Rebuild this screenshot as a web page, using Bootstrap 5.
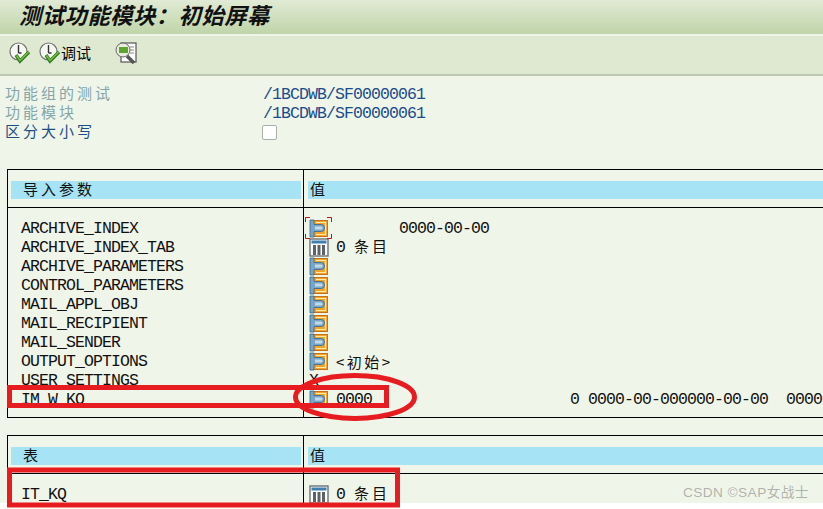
<!DOCTYPE html>
<html lang="zh"><head><meta charset="utf-8"><title>测试功能模块</title>
<link href="https://cdn.jsdelivr.net/npm/bootstrap@5.3.0/dist/css/bootstrap.min.css" rel="stylesheet">
<style>
html,body{margin:0;background:#fff;overflow:hidden}
.sap-page{position:relative;width:823px;height:503px;overflow:hidden;background:#f0f5e9;color:#111;font:16.5px/19px "Liberation Mono","Noto Sans CJK SC",monospace;letter-spacing:-.9px}
.sap-cjk{font-family:"Noto Sans CJK SC",sans-serif;font-size:15px;letter-spacing:3px;line-height:15px}
.sap-title{height:34px;padding-left:19px;background:linear-gradient(#e1ead5,#bfd5a9);font:italic 700 22.300px/29px "Noto Sans CJK SC",sans-serif;letter-spacing:.5px;color:#111}
.sap-tools{height:40px;margin-top:2px;padding:0 0 5px 9px;background:#dfe8d0;border-bottom:2px solid #bcc9b0}
.sap-tools .sap-btn{font:15px/1 "Noto Sans CJK SC",sans-serif;letter-spacing:0;color:#000}
.sap-info{height:93px;padding-top:9px}
.sap-info-label{width:263px;padding-left:5px;height:19px}
.sap-dim{color:#83a6ab}
.sap-deep{color:#1d4f85}
.sap-val{color:#1a4d8c}
.sap-check{width:15px;height:15px;background:#fff;border:1px solid #aab0a8;border-radius:2px;margin-top:2px;margin-left:-1px}
.sap-grid{margin-left:7px;border:solid #000;border-width:1px 0 1px 1px}
.sap-grid-last{border-bottom:0;height:68px;margin-top:17px}
.sap-side{width:296px;flex:none;border-right:1px solid #000}
.sap-head{border-bottom:1px solid #000;padding:11px 0 8px}
.sap-band{height:18px;background:#a6e4f5;line-height:16px}
.sap-side .sap-band{margin:0 2px 0 3px;padding-left:12px}
.sap-fill{flex:1;min-width:0}
.sap-fill .sap-band{margin-left:4px;padding-left:2px}
.sap-rows{padding:11px 0 8px}
.sap-rows-last{padding:11px 0 0}
.sap-cell{height:19px;padding-left:13px;white-space:pre}
.sap-cell-v{height:19px;padding-left:5px;white-space:pre;display:flex;align-items:center}
.sap-ico{flex:none;width:20px;height:19px;display:block}
.sap-txt{margin-left:7px}
.sap-txt.sap-cjk{letter-spacing:2.500px}
.sap-overlay{position:absolute;left:0;top:0;pointer-events:none}
.sap-mark{position:absolute;left:683px;top:484px;font:13.700px/18px "Liberation Sans","Noto Sans CJK SC",sans-serif;letter-spacing:.4px;color:rgba(120,120,120,.55)}
.sap-selmark{position:absolute;left:305px;top:217px;width:27px;height:22px}
</style></head>
<body>
<svg width="0" height="0" class="d-block position-absolute">
<defs>
<symbol id="i-s" viewBox="0 0 20 19"><rect x="4.500" y="1.500" width="14" height="16" fill="#f3a32c" stroke="#c9701a"/><path d="M7 3.500h9.500v12H7" fill="none" stroke="#fde9a8" stroke-width="1.200"/><path d="M1 1h4v4.500h7.500q3 0 3 3.500t-3 3.500H5V18H1z" fill="#7aa5c9" stroke="#2f6793" stroke-width=".8"/><path d="M6 7.500h6q1.500 0 1.500 1.500t-1.500 1.500H6z" fill="#c4d9e8"/></symbol>
<symbol id="i-t" viewBox="0 0 20 19"><rect x="1" y="1" width="18" height="17" fill="#fff" stroke="#6a6f74" stroke-width="1.400"/><rect x="2.500" y="2.500" width="15" height="3" fill="#3f7fb0"/><path d="M4 7h3v10H4zM8.500 7h3v10h-3zM13 7h3v10h-3z" fill="#5d6266"/></symbol>
<symbol id="i-c" viewBox="0 0 22 22"><circle cx="9.500" cy="9.500" r="8.500" fill="#f7f8f4" stroke="#6f7370" stroke-width="1.200"/><path d="M9.500 3v8M9.500 11h3" stroke="#333" stroke-width="1.400" fill="none"/><path d="M7 13l4 6 9-9" fill="none" stroke="#2f7d1f" stroke-width="3.400"/><path d="M7.500 13.500l3.500 5 8.500-8.500" fill="none" stroke="#7ec043" stroke-width="1.400"/></symbol>
</defs></svg>
<div class="sap-page">
 <div class="sap-title">测试功能模块：初始屏幕</div>
 <div class="sap-tools d-flex align-items-center">
  <svg width="22" height="22"><use href="#i-c"/></svg>
  <svg class="ms-2" width="22" height="22"><use href="#i-c"/></svg>
  <span class="sap-btn">调试</span>
  <svg class="ms-4" width="22" height="22" viewBox="0 0 22 22"><rect x="6" y="1" width="15" height="19" fill="#fff" stroke="#555" stroke-width="1.200"/><path d="M15 5h4M15 8h4M15 11h4" stroke="#888"/><circle cx="8" cy="8" r="7" fill="#e9ecdf" stroke="#666"/><rect x="4" y="5" width="9" height="6" fill="#5da62e"/><path d="M12 14l7 7" stroke="#555" stroke-width="3.500"/></svg>
 </div>
 <div class="sap-info">
  <div class="d-flex"><div class="sap-info-label sap-cjk sap-dim">功能组的测试</div><div class="sap-val">/1BCDWB/SF00000061</div></div>
  <div class="d-flex"><div class="sap-info-label sap-cjk sap-dim">功能模块</div><div class="sap-val">/1BCDWB/SF00000061</div></div>
  <div class="d-flex"><div class="sap-info-label sap-cjk sap-deep">区分大小写</div><div class="sap-check"></div></div>
 </div>
 <div class="sap-grid d-flex">
  <div class="sap-side">
   <div class="sap-head"><div class="sap-band sap-cjk">导入参数</div></div>
   <div class="sap-rows">
    <div class="sap-cell">ARCHIVE_INDEX</div><div class="sap-cell">ARCHIVE_INDEX_TAB</div><div class="sap-cell">ARCHIVE_PARAMETERS</div><div class="sap-cell">CONTROL_PARAMETERS</div><div class="sap-cell">MAIL_APPL_OBJ</div><div class="sap-cell">MAIL_RECIPIENT</div><div class="sap-cell">MAIL_SENDER</div><div class="sap-cell">OUTPUT_OPTIONS</div><div class="sap-cell">USER_SETTINGS</div><div class="sap-cell">IM_W_KQ</div>
   </div>
  </div>
  <div class="sap-fill">
   <div class="sap-head"><div class="sap-band sap-cjk">值</div></div>
   <div class="sap-rows">
    <div class="sap-cell-v"><svg class="sap-ico"><use href="#i-s"/></svg><span class="sap-txt">       0000-00-00</span></div>
    <div class="sap-cell-v"><svg class="sap-ico"><use href="#i-t"/></svg><span class="sap-txt">0 <span class="sap-cjk">条目</span></span></div>
    <div class="sap-cell-v"><svg class="sap-ico"><use href="#i-s"/></svg></div>
    <div class="sap-cell-v"><svg class="sap-ico"><use href="#i-s"/></svg></div>
    <div class="sap-cell-v"><svg class="sap-ico"><use href="#i-s"/></svg></div>
    <div class="sap-cell-v"><svg class="sap-ico"><use href="#i-s"/></svg></div>
    <div class="sap-cell-v"><svg class="sap-ico"><use href="#i-s"/></svg></div>
    <div class="sap-cell-v"><svg class="sap-ico"><use href="#i-s"/></svg><span class="sap-txt sap-cjk">&lt;初始&gt;</span></div>
    <div class="sap-cell-v">X</div>
    <div class="sap-cell-v"><svg class="sap-ico"><use href="#i-s"/></svg><span class="sap-txt">0000                      0 0000-00-000000-00-00  0000</span></div>
   </div>
  </div>
 </div>
 <div class="sap-grid sap-grid-last d-flex">
  <div class="sap-side">
   <div class="sap-head"><div class="sap-band sap-cjk">表</div></div>
   <div class="sap-rows-last"><div class="sap-cell">IT_KQ</div></div>
  </div>
  <div class="sap-fill">
   <div class="sap-head"><div class="sap-band sap-cjk">值</div></div>
   <div class="sap-rows-last"><div class="sap-cell-v"><svg class="sap-ico"><use href="#i-t"/></svg><span class="sap-txt">0 <span class="sap-cjk">条目</span></span></div></div>
  </div>
 </div>
 <svg class="sap-selmark" fill="none" stroke="#b5161b" stroke-width="1"><path d="M.5 5V.5H5M22 .5h4.500V5M.5 17v4.500H5M22 21.500h4.500V17"/></svg>
 <div class="sap-mark">CSDN ©SAP女战士</div>
</div>
<svg class="sap-overlay" width="823" height="509" fill="none" stroke="#e71c20" stroke-width="5">
 <rect x="9.500" y="387.500" width="377" height="18"/>
 <ellipse cx="355" cy="397" rx="59.500" ry="21.500"/>
 <rect x="9.500" y="470" width="388" height="35"/>
</svg>
<script src="https://cdn.jsdelivr.net/npm/bootstrap@5.3.0/dist/js/bootstrap.bundle.min.js"></script>
</body></html>
